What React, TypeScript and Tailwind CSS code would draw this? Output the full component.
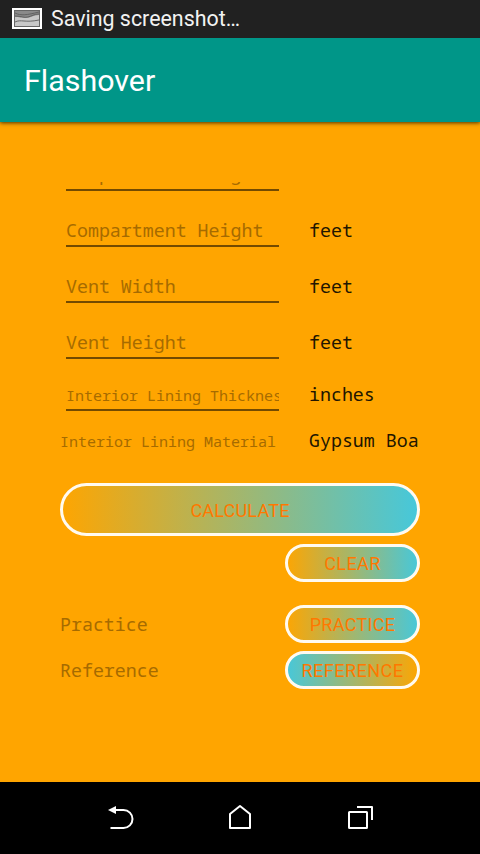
import React from "react";

const MONO = "font-['Noto_Sans_Mono','Droid_Sans_Mono','DejaVu_Sans_Mono',monospace]";

function Field({ hint, unit, small = false }: { hint: string; unit: string; small?: boolean }) {
  return (
    <div className={`flex shrink-0 ${small ? "h-[52px]" : "h-14"}`}>
      <div className={`ml-1.5 flex w-[213px] items-end overflow-hidden border-b-2 border-[#734a00] whitespace-pre ${small ? "pb-[2px]" : "pb-[3px]"}`}>
        <span className={`leading-6 text-[#a66b00] ${small ? "text-[15px]" : "text-[18.3px]"}`}>{hint}</span>
      </div>
      <div className="ml-[30px] flex items-end pb-[5px]">
        <span className="text-[18.27px] leading-6 text-[#211500]">{unit}</span>
      </div>
    </div>
  );
}

function Pill({ label, className }: { label: string; className: string }) {
  return (
    <button
      className={`flex shrink-0 items-center justify-center rounded-full border-[3px] border-[#fffaf0] bg-origin-border pt-[2px] font-['Roboto',sans-serif] text-[18px] leading-5 text-[#ff7800] ${className}`}
    >
      {label}
    </button>
  );
}

function ThumbnailIcon() {
  return (
    <svg width="32" height="22" viewBox="0 0 32 22" fill="none">
      <rect x="2" y="1" width="28" height="19" fill="#555" stroke="#fff" strokeWidth="2" />
      <rect x="3.5" y="2.500" width="25" height="16" fill="#c8c8c8" stroke="#666" />
      <path d="M4 3h24v4c-6 0-8 3-13 3s-7-1-11-1z" fill="#8a8a8a" />
      <path d="M4 5c6 3 12 2 24-1M4 8c6 0 9 2 13 1s6-3 11-3M4 14c6-3 10 1 24-2" stroke="#5c5c5c" strokeWidth=".9" />
    </svg>
  );
}

export default function App() {
  return (
    <div className="flex h-[854px] w-[480px] flex-col overflow-hidden bg-[#ffa500]">
      <div className="z-20 flex h-[38px] shrink-0 items-center bg-[#212121] pl-[11px] font-['Roboto',sans-serif] text-[21.4px] text-[#f2f2f2]">
        <ThumbnailIcon />
        <span className="ml-2 pt-px">Saving screenshot…</span>
      </div>
      <header className="z-10 flex h-[84px] shrink-0 items-center bg-[#009688] pt-[2px] pl-6 font-['Roboto',sans-serif] text-[30.4px] text-white shadow-[0_1px_4px_rgba(0,0,0,0.7)]">
        Flashover
      </header>

      <main className={`mx-[60px] mt-[60px] flex h-[600px] flex-col overflow-hidden ${MONO}`}>
        <div className="-mt-[47px] flex flex-col">
          <Field hint="Compartment Length" unit="" />
          <Field hint="Compartment Height" unit="feet" />
          <Field hint="Vent Width" unit="feet" />
          <Field hint="Vent Height" unit="feet" />
          <Field hint="Interior Lining Thickness" unit="inches" small />
        </div>
        <div className="mt-[17px] flex h-6 shrink-0 items-baseline whitespace-pre leading-6">
          <span className="w-[249px] text-[15px] text-[#a66b00]">Interior Lining Material</span>
          <span className="text-[18.27px] text-[#211500]">Gypsum Boa</span>
        </div>
        <Pill label="CALCULATE" className="mt-[31px] h-[53px] bg-linear-to-r/srgb from-[#ffa500] to-[#45c8dc] tracking-[0.2px]" />
        <Pill label="CLEAR" className="mt-2 h-[38px] w-[135px] self-end bg-linear-to-r/srgb from-[#ffa500] to-[#45c8dc] tracking-[0.4px]" />
        <div className="mt-[23px] flex h-[38px] shrink-0 items-center justify-between">
          <span className="text-[18.27px] leading-6 text-[#a66b00]">Practice</span>
          <Pill label="PRACTICE" className="h-[38px] w-[135px] bg-linear-to-r/srgb from-[#ffa500] to-[#45c8dc] tracking-[0.3px]" />
        </div>
        <div className="mt-2 flex h-[38px] shrink-0 items-center justify-between">
          <span className="text-[18.27px] leading-6 text-[#a66b00]">Reference</span>
          <Pill label="REFERENCE" className="h-[38px] w-[135px] bg-linear-to-l/srgb from-[#ffa500] to-[#45c8dc] tracking-[0.5px]" />
        </div>
      </main>

      <nav className="flex h-[72px] shrink-0 items-center justify-center gap-20 bg-black">
        <svg width="40" height="40" viewBox="0 0 40 40" fill="none" stroke="#fff" strokeWidth="2">
          <path d="M14 12h9.500a9 9 0 0 1 0 18H10.500" />
          <path d="M8 12l8-4v8z" fill="#fff" stroke="none" />
        </svg>
        <svg width="40" height="40" viewBox="0 0 40 40" fill="none" stroke="#fff" strokeWidth="2" strokeLinejoin="round">
          <path d="M10 30V16l10-8 10 8v14z" />
        </svg>
        <svg width="40" height="40" viewBox="0 0 40 40" fill="none" stroke="#fff" strokeWidth="2" strokeLinejoin="round">
          <rect x="9" y="14" width="18" height="16" rx=".5" />
          <path d="M17 9h15v13" />
        </svg>
      </nav>
    </div>
  );
}
